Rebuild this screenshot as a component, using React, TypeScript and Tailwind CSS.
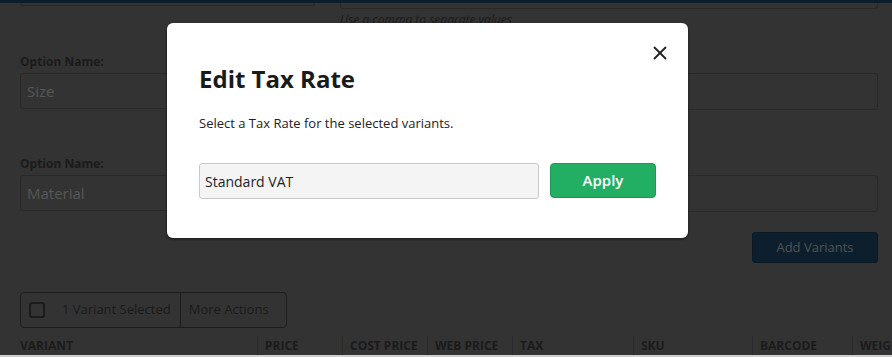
import { X } from 'lucide-react';

const columns = [
  { label: 'Variant', width: 'w-[237px]', first: true },
  { label: 'Price', width: 'w-[85px]' },
  { label: 'Cost Price', width: 'w-[85px]' },
  { label: 'Web Price', width: 'w-[85px]' },
  { label: 'Tax', width: 'w-[121px]' },
  { label: 'SKU', width: 'w-[119px]' },
  { label: 'Barcode', width: 'w-[100px]' },
  { label: 'Weight', width: 'w-[60px]' },
];

function OptionRow({ name, values }: { name: string; values: string }) {
  return (
    <div className="grid grid-cols-[295px_1fr] gap-x-[25px]">
      <div>
        <div className="text-[12px] leading-[16px] font-bold text-[#1b1b1b]">
          Option Name:
        </div>
        <div className="mt-[3px] flex h-[36px] items-center rounded-[3px] border border-[#292929] px-[6px] text-[15px] text-[#575757]">
          {name}
        </div>
      </div>
      <div>
        <div className="text-[12px] leading-[16px] font-bold text-[#1b1b1b]">
          Option Values:
        </div>
        <div className="mt-[3px] flex h-[37px] items-center rounded-[3px] border border-[#292929] px-[6px] text-[15px] text-[#575757]">
          {values}
        </div>
        <div className="mt-[2px] text-[12px] leading-[16px] italic text-[#1b1b1b]">
          Use a comma to separate values
        </div>
      </div>
    </div>
  );
}

export default function App() {
  return (
    <div className="relative h-[357px] w-[892px] overflow-hidden bg-[#333333] font-['Open_Sans',sans-serif]">
      {/* page behind the dialog, already dimmed */}
      <div className="h-[3px] bg-[#0c1d2b]" />
      <div className="pr-[14px] pl-5">
        <div className="grid grid-cols-[295px_1fr] gap-x-[25px]">
          <div className="h-[3px] rounded-b-[3px] border-x border-b border-[#292929]" />
          <div>
            <div className="h-[6px] rounded-b-[3px] border-x border-b border-[#292929]" />
            <div className="mt-[3px] text-[12px] leading-[16px] italic text-[#1b1b1b]">
              Use a comma to separate values
            </div>
          </div>
        </div>

        <div className="mt-[26px]">
          <OptionRow name="Size" values="S, M, L" />
        </div>
        <div className="mt-[28px]">
          <OptionRow name="Material" values="Cotton" />
        </div>

        <div className="mt-[2px] flex justify-end">
          <button className="h-[31px] w-[126px] rounded-[3px] border border-[#0a1923] bg-[#0d1f2c] text-[13px] text-[#4f5357]">
            Add Variants
          </button>
        </div>

        <div className="mt-[29px] flex h-[36px] w-[267px] items-center rounded-[4px] border border-[#1d1d1d] text-[13px] text-[#1b1b1b]">
          <div className="ml-[8px] h-[16px] w-[16px] rounded-[3px] border-2 border-[#1b1b1b]" />
          <span className="ml-[17px]">1 Variant Selected</span>
          <div className="ml-[9px] h-full border-l border-[#1b1b1b]" />
          <span className="ml-[8px]">More Actions</span>
        </div>

        <div className="mt-[8px] flex h-[19px] items-start">
          {columns.map((col) => (
            <div
              key={col.label}
              className={`${col.width} shrink-0 ${col.first ? '' : 'border-l border-[#2b2b2b] pl-[7px]'} h-full pt-[2px] text-[12px] leading-[16px] font-bold whitespace-nowrap text-[#1b1b1b] uppercase`}
            >
              {col.label}
            </div>
          ))}
        </div>
      </div>
      <div className="h-[2px] bg-[#cfcfcf]" />

      {/* dialog */}
      <div className="absolute top-[23px] left-[167px] h-[215px] w-[521px] rounded-[6px] bg-white px-[32px] pt-[40px] shadow-[0_1px_3px_rgba(0,0,0,0.6)]">
        <button className="absolute top-[19px] right-[17px] text-[#222]">
          <X size={22} strokeWidth={2} />
        </button>
        <h2 className="text-[24px] leading-[32px] font-bold text-[#1a1a1a]">
          Edit Tax Rate
        </h2>
        <p className="mt-[18px] text-[13px] leading-[20px] text-[#222]">
          Select a Tax Rate for the selected variants.
        </p>
        <div className="mt-[30px] flex gap-[11px]">
          <div className="flex h-[36px] w-[340px] items-center rounded-[3px] border border-[#c9c9c9] bg-[#f4f4f4] px-[5px] text-[14px] text-[#1e1e1e]">
            Standard VAT
          </div>
          <button className="h-[35px] w-[106px] rounded-[4px] border border-[#1b9a55] bg-[#22ae63] text-[15px] font-semibold text-white">
            Apply
          </button>
        </div>
      </div>
    </div>
  );
}
